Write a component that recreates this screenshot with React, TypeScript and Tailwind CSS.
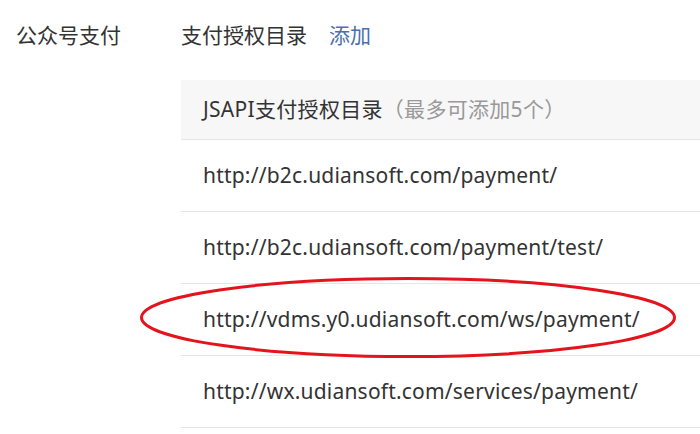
import React from "react";

const urls = [
  "http://b2c.udiansoft.com/payment/",
  "http://b2c.udiansoft.com/payment/test/",
  "http://vdms.y0.udiansoft.com/ws/payment/",
  "http://wx.udiansoft.com/services/payment/",
];

export default function App() {
  return (
    <div
      className="relative w-[700px] h-[434px] overflow-hidden bg-white text-[#333333]"
      style={{ fontFamily: '"Noto Sans", "Noto Sans CJK SC", sans-serif' }}
    >
      <div className="flex pl-[16px] pt-[20px]">
        <div className="w-[165px] shrink-0 text-[21px] leading-[30px]">公众号支付</div>
        <div className="flex-1 flex flex-col">
          <div className="flex items-center text-[21px] leading-[30px]">
            <span>支付授权目录</span>
            <span className="ml-[22px] text-[#4a6fb0]">添加</span>
          </div>
          <div className="mt-[30px]">
            <div className="h-[60px] bg-[#f7f7f7] border-b border-[#e6e6e6] flex items-center pl-[22px] text-[21px] tracking-[0.3px]">
              <span>JSAPI支付授权目录</span>
              <span className="text-[#999999]">（最多可添加5个）</span>
            </div>
            {urls.map((u) => (
              <div
                key={u}
                className="h-[72px] border-b border-[#e6e6e6] flex items-center pl-[22px] text-[21px] tracking-[0.2px]"
              >
                {u}
              </div>
            ))}
          </div>
        </div>
      </div>
      <svg
        className="absolute left-0 top-0 pointer-events-none"
        width="700"
        height="434"
      >
        <ellipse cx="408" cy="317.5" rx="266.5" ry="39" fill="none" stroke="#e3141d" strokeWidth="3" />
      </svg>
    </div>
  );
}
